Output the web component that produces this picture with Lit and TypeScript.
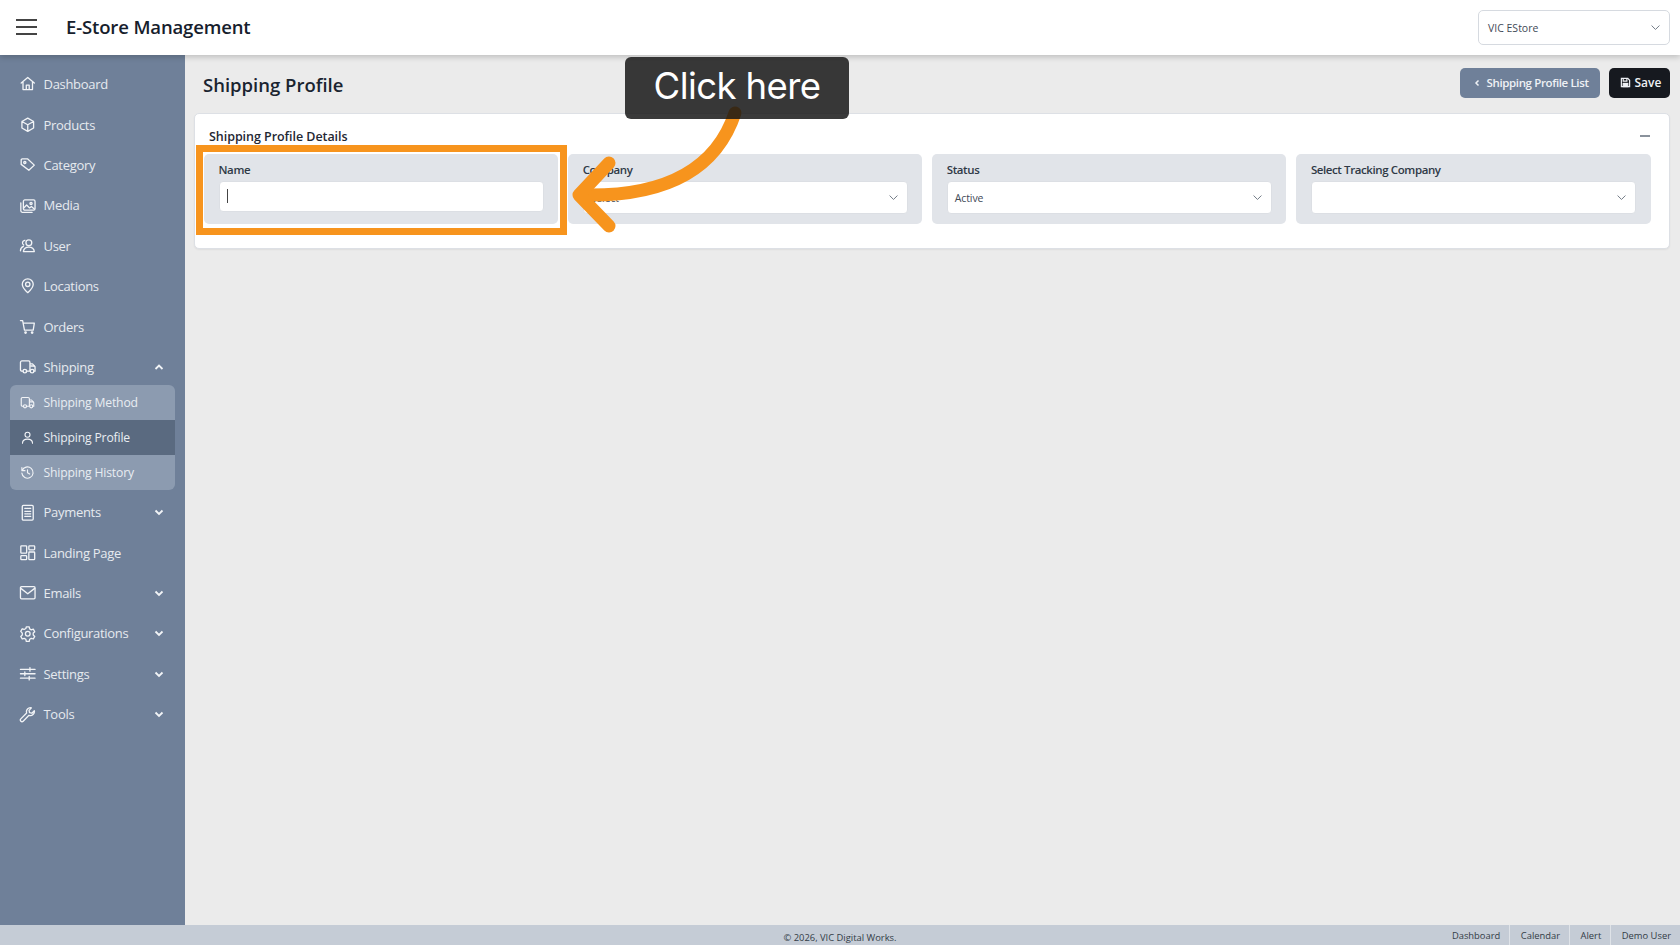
import { LitElement, html, css, svg } from "lit";
import { customElement } from "lit/decorators.js";

const ic: Record<string, any> = {
  home: svg`<path d="M3 11 12 3.500 21 11M5.500 9.500V20h13V9.500M10 20v-6h4v6"/>`,
  box: svg`<path d="M12 3l8 4.500v9L12 21l-8-4.500v-9zM4 7.500l8 4.500 8-4.500M12 12v9"/>`,
  tag: svg`<path d="M3 5.500A1.500 1.500 0 0 1 4.500 4H12l9 8.500-7.500 7L3 11.500z"/><circle cx="8" cy="9" r="1.500"/>`,
  media: svg`<rect x="6" y="4" width="16" height="14" rx="2"/><path d="M2.500 8v11a2 2 0 0 0 2 2H18M6.500 15l4-4 4 4 2.500-2 4 3.500"/><circle cx="16.500" cy="9" r="1.500"/>`,
  user: svg`<circle cx="13.500" cy="8" r="4"/><path d="M6 20c.5-4 3.500-6 7.500-6s7 2 7.500 6zM8 4.500A3.500 3.500 0 0 0 6.500 11M2 19c0-3 1.500-5 4-6"/>`,
  pin: svg`<path d="M12 21.500c-4-3.500-7.500-7-7.500-11.500a7.500 7.500 0 0 1 15 0c0 4.500-3.500 8-7.500 11.500z"/><circle cx="12" cy="10" r="3"/>`,
  cart: svg`<path d="M2 3.500h3l2.500 13h12l1.500-9.500H6"/><circle cx="9" cy="20" r="1"/><circle cx="18" cy="20" r="1"/>`,
  truck: svg`<path d="M6 18H4a2 2 0 0 1-2-2V6a2 2 0 0 1 2-2h9a2 2 0 0 1 2 2v12h-5M15 8h3.500l3.500 4v6h-2"/><circle cx="8" cy="18" r="2.500"/><circle cx="18" cy="18" r="2.500"/><path d="M16 11h5" />`,
  person: svg`<circle cx="12" cy="7.500" r="4"/><path d="M4 21c0-4.500 3.500-6.500 8-6.500s8 2 8 6.500"/>`,
  history: svg`<path d="M3 4v5h5M3.500 9A9 9 0 1 1 3 13M12 7.500V12.500l3.500 2"/>`,
  calc: svg`<rect x="4.500" y="2" width="15" height="20" rx="1.500"/><path d="M8 6h8M8 10h8M8 13.500h8M8 17h8" stroke-dasharray="2 1"/>`,
  grid: svg`<rect x="2.500" y="2.500" width="8" height="10" rx="1"/><rect x="13.500" y="2.500" width="8" height="5.500" rx="1"/><rect x="2.500" y="16" width="8" height="5.500" rx="1"/><rect x="13.500" y="11" width="8" height="10.500" rx="1"/>`,
  mail: svg`<rect x="2" y="3.500" width="20" height="17" rx="1.500"/><path d="M2.500 6 12 13.500 21.500 6"/>`,
  gear: svg`<circle cx="12" cy="12" r="3.200"/><path d="M10 2.500h4l.6 2.800 2.300 1.300 2.700-.9 2 3.500-2.100 1.900v2.700l2.100 1.900-2 3.500-2.700-.9-2.300 1.300-.6 2.800h-4l-.6-2.800-2.300-1.300-2.700.9-2-3.500 2.100-1.900v-2.700L2.400 8.700l2-3.500 2.700.9 2.300-1.300z"/>`,
  sliders: svg`<path d="M2 6h20M2 12h20M2 18h20"/><path d="M15 3.500v5M8 9.500v5M14 15.500v5"/>`,
  wrench: svg`<path d="M21 6.500a5.500 5.500 0 0 1-7.300 6.300l-8 8a2.200 2.200 0 0 1-3.200-3.100l8-8.100A5.500 5.500 0 0 1 17 2.500L13.800 6l.6 3.200 3.200.7z"/>`,
};

const icon = (n: string) => html`<svg class="ico" viewBox="0 0 24 24">${ic[n]}</svg>`;
const chev = (up = false) => html`<svg class="chev" viewBox="0 0 12 12"><path d=${up ? "M2.500 8 6 4.500 9.500 8" : "M2.500 4.500 6 8 9.500 4.500"}/></svg>`;
const selChev = html`<svg class="selchev" viewBox="0 0 14 14"><path d="M2 4.500 7 9.500 12 4.500"/></svg>`;

type Nav = { l: string; i: string; c?: "d" | "u" };
const top: Nav[] = [
  { l: "Dashboard", i: "home" }, { l: "Products", i: "box" }, { l: "Category", i: "tag" },
  { l: "Media", i: "media" }, { l: "User", i: "user" }, { l: "Locations", i: "pin" }, { l: "Orders", i: "cart" },
  { l: "Shipping", i: "truck", c: "u" },
];
const bottom: Nav[] = [
  { l: "Payments", i: "calc", c: "d" }, { l: "Landing Page", i: "grid" }, { l: "Emails", i: "mail", c: "d" },
  { l: "Configurations", i: "gear", c: "d" }, { l: "Settings", i: "sliders", c: "d" }, { l: "Tools", i: "wrench", c: "d" },
];

@customElement("app-root")
export class AppRoot extends LitElement {
  static styles = css`
    :host { display: block; width: 1680px; height: 945px; position: relative; overflow: hidden; font-family: "Open Sans", "Noto Sans", sans-serif; color: #1f2733; background: #ebebeb; }
    .app { display: grid; grid-template-rows: 55px 1fr 20px; height: 945px; }
    header { display: flex; align-items: center; background: #fff; box-shadow: 0 2px 6px rgba(0,0,0,.2); position: relative; z-index: 2; padding: 0 10px 0 15.500px; }
    .burger { width: 21px; height: 16px; margin-right: 29.500px; display: flex; flex-direction: column; justify-content: space-between; position: relative; top: -1px; }
    .burger i { display: block; height: 2px; background: #444; }
    .brand { font-size: 18.500px; font-weight: 600; color: #16202c; flex: 1; letter-spacing: -.14px; position: relative; top: -1.500px; }
    .store { width: 192px; height: 35px; box-sizing: border-box; border: 1px solid #d6dae0; border-radius: 5px; display: flex; align-items: center; justify-content: space-between; padding: 0 8px 0 9px; font-size: 10.500px; color: #3f4a57; }
    .selchev { width: 11px; height: 11px; fill: none; stroke: #6b7480; stroke-width: 1.200; }
    .mid { display: grid; grid-template-columns: 184.500px 1fr; min-height: 0; }
    aside { background: #6f8099; color: #eef1f5; padding: 9px 10px 0; }
    .item { height: 40.400px; display: flex; align-items: center; padding-left: 8.500px; font-size: 13px; letter-spacing: -.3px; color: #e6eaef; }
    .ico { width: 17.500px; height: 17.500px; fill: none; stroke: #f2f4f7; stroke-width: 1.800; stroke-linecap: round; stroke-linejoin: round; flex: none; margin-right: 7.500px; }
    .chev { width: 12px; height: 12px; margin-left: auto; margin-right: 10px; fill: none; stroke: #f2f4f7; stroke-width: 1.800; }
    .sub { border-radius: 6px; overflow: hidden; background: #8c9bb0; margin-top: -2px; margin-bottom: 2px; }
    .sub div { height: 35px; display: flex; align-items: center; padding-left: 10px; font-size: 12.200px; letter-spacing: -.17px; color: #e9edf2; }
    .sub .ico { width: 15px; height: 15px; margin-right: 8.500px; }
    .sub .on { background: #5a6a80; }
    main { padding: 0 10px 0 9.500px; min-width: 0; }
    .titlebar { height: 58px; display: flex; align-items: center; padding-left: 9px; gap: 9px; }
    h1 { margin: 0 auto 0 0; font-size: 18.500px; font-weight: 600; color: #1a2430; }
    .btn { height: 30px; border-radius: 5px; display: flex; align-items: center; font-size: 11.500px; font-weight: 600; letter-spacing: -.37px; color: #eef1f5; box-sizing: border-box; position: relative; top: -1.500px; }
    .btn svg { flex: none; }
    .b1 { width: 140px; background: #6f8099; padding-left: 13px; gap: 6px; }
    .b2 { width: 61.500px; background: #16191f; padding-left: 11px; gap: 4px; font-size: 12px; letter-spacing: 0; }
    .card { height: 136px; box-sizing: border-box; background: #fff; border: 1px solid #dde0e5; border-radius: 5px; box-shadow: 0 1px 2px rgba(0,0,0,.06); padding: 0 9px 0 9px; }
    .cardhead { height: 40px; display: flex; align-items: center; justify-content: space-between; padding: 0 11px 0 5px; font-size: 12.500px; font-weight: 600; letter-spacing: -.05px; color: #1f2733; position: relative; top: 2px; }
    .minus { width: 10px; height: 1.500px; background: #8a929c; margin-right: -1px; }
    .fields { display: grid; grid-template-columns: repeat(4, 1fr); gap: 10px; padding-right: 9.500px; }
    .field { height: 70px; background: #e1e4e9; border-radius: 5px; box-sizing: border-box; padding: 8px 14.500px 0; font-size: 11.500px; font-weight: 600; letter-spacing: -.4px; color: #2f3946; }
    .lab { height: 19px; line-height: 15px; }
    .ctl { height: 33px; box-sizing: border-box; background: #fff; border: 1px solid #dcdfe4; border-radius: 4px; display: flex; align-items: center; justify-content: space-between; padding: 0 8px 0 7px; font-size: 10.500px; font-weight: 400; letter-spacing: -.1px; color: #3f4a57; }
    .ctl.input { height: 31px; margin-top: -.5px; }
    .caret { width: 1px; height: 14px; background: #444; }
    footer { background: #c5ccd6; display: flex; align-items: stretch; font-size: 9.400px; color: #333c47; position: relative; z-index: 1; }
    .copy { flex: 1; text-align: center; padding-top: 5px; line-height: 15px; }
    .flinks { display: flex; align-items: center; position: absolute; right: 0; top: 0; bottom: 0; }
    .flinks span { padding: 0 9px 0 10.500px; border-left: 1px solid #dfe3e8; height: 20px; line-height: 21px; }
    .flinks span:first-child { border-left: 0; }
    .hl { position: absolute; left: 196px; top: 145px; width: 371px; height: 90px; box-sizing: border-box; border: 7px solid #f7941d; z-index: 3; }
    .arrow { position: absolute; left: 0; top: 0; z-index: 4; pointer-events: none; }
    .tip { position: absolute; left: 625px; top: 57px; width: 224px; height: 62px; background: rgba(20,20,20,.84); border-radius: 6px; color: #fff; font-family: Inter, "Liberation Sans", sans-serif; font-size: 36.500px; letter-spacing: -.6px; display: flex; align-items: center; justify-content: center; z-index: 5; padding-bottom: 4px; box-sizing: border-box; }
  `;

  private row(n: Nav) {
    return html`<div class="item">${icon(n.i)}<span>${n.l}</span>${n.c ? chev(n.c === "u") : ""}</div>`;
  }

  render() {
    return html`
      <div class="app">
        <header>
          <div class="burger"><i></i><i></i><i></i></div>
          <div class="brand">E-Store Management</div>
          <div class="store"><span>VIC EStore</span>${selChev}</div>
        </header>
        <div class="mid">
          <aside>
            ${top.map((n) => this.row(n))}
            <div class="sub">
              <div>${icon("truck")}Shipping Method</div>
              <div class="on">${icon("person")}Shipping Profile</div>
              <div>${icon("history")}Shipping History</div>
            </div>
            ${bottom.map((n) => this.row(n))}
          </aside>
          <main>
            <div class="titlebar">
              <h1>Shipping Profile</h1>
              <div class="btn b1"><svg width="8" height="8" viewBox="0 0 8 8" fill="none" stroke="#eef1f5" stroke-width="1.500"><path d="M5.500 1.500 3 4l2.500 2.500"/></svg>Shipping Profile List</div>
              <div class="btn b2"><svg width="11" height="11" viewBox="0 0 12 12" fill="none" stroke="#eef1f5" stroke-width="1.300"><path d="M1.500 1.500h7l2 2v7h-9z"/><path d="M3.500 1.500v3h4v-3"/><rect x="3.500" y="7" width="5" height="3.500" fill="#eef1f5"/></svg>Save</div>
            </div>
            <section class="card">
              <div class="cardhead"><span>Shipping Profile Details</span><i class="minus"></i></div>
              <div class="fields">
                <div class="field"><div class="lab">Name</div><div class="ctl input"><i class="caret"></i></div></div>
                <div class="field"><div class="lab">Company</div><div class="ctl"><span>Select</span>${selChev}</div></div>
                <div class="field"><div class="lab">Status</div><div class="ctl"><span>Active</span>${selChev}</div></div>
                <div class="field"><div class="lab">Select Tracking Company</div><div class="ctl"><span></span>${selChev}</div></div>
              </div>
            </section>
          </main>
        </div>
        <footer>
          <div class="copy">© 2026, VIC Digital Works.</div>
          <div class="flinks"><span>Dashboard</span><span>Calendar</span><span>Alert</span><span>Demo User</span></div>
        </footer>
      </div>
      <div class="hl"></div>
      <svg class="arrow" width="1680" height="945" fill="none" stroke="#f7941d" stroke-width="13" stroke-linecap="round" stroke-linejoin="round">
        <path d="M735 113C716 170 665 197 582 195"/>
        <path d="M609 163 579 195 609 226"/>
      </svg>
      <div class="tip">Click here</div>
    `;
  }
}
